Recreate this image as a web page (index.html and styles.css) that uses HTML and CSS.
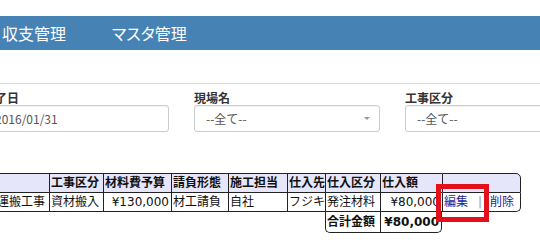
FILE: index.html
```html
<!DOCTYPE html>
<html lang="ja">
<head>
    <meta charset="UTF-8">
    <meta name="viewport" content="width=device-width, initial-scale=1.0">
    <title>仕入一覧</title>
    <link rel="stylesheet" href="styles.css">
</head>
<body>
    <header class="navbar">
        <ul class="nav">
            <li>収支管理</li>
            <li>マスタ管理</li>
        </ul>
    </header>

    <div class="panel">
        <div class="filters">
            <div class="field">
                <label>完了日</label>
                <div class="control">2016/01/31</div>
            </div>
            <div class="field">
                <label>現場名</label>
                <div class="control select">--全て--<span class="caret"></span></div>
            </div>
            <div class="field">
                <label>工事区分</label>
                <div class="control select">--全て--<span class="caret"></span></div>
            </div>
        </div>

        <div class="list">
            <table class="grid">
                <colgroup>
                    <col class="c-name">
                    <col class="c-kind">
                    <col class="c-budget">
                    <col class="c-contract">
                    <col class="c-staff">
                    <col class="c-vendor">
                    <col class="c-type">
                    <col class="c-amount">
                    <col class="c-action">
                </colgroup>
                <thead>
                    <tr>
                        <th>工事名</th>
                        <th>工事区分</th>
                        <th>材料費予算</th>
                        <th>請負形態</th>
                        <th>施工担当</th>
                        <th>仕入先</th>
                        <th>仕入区分</th>
                        <th>仕入額</th>
                        <th class="last"></th>
                    </tr>
                </thead>
                <tbody>
                    <tr>
                        <td class="name">本社倉庫資材運搬工事</td>
                        <td>資材搬入</td>
                        <td class="num">¥130,000</td>
                        <td>材工請負</td>
                        <td>自社</td>
                        <td>フジキ</td>
                        <td>発注材料</td>
                        <td class="num">¥80,000</td>
                        <td class="last actions"><a href="#">編集</a><span class="sep">|</span><a href="#">削除</a></td>
                    </tr>
                </tbody>
                <tfoot>
                    <tr>
                        <td colspan="6" class="blank"></td>
                        <td class="sum first">合計金額</td>
                        <td class="sum num last">¥80,000</td>
                        <td class="blank"></td>
                    </tr>
                </tfoot>
            </table>
            <div class="highlight"></div>
        </div>
    </div>
</body>
</html>
```

FILE: styles.css
```css
body {
    margin: 0;
    font-family: "Noto Sans CJK JP", "Noto Sans", sans-serif;
    color: #333;
    background: #fff;
    overflow: hidden;
}

.navbar {
    margin-top: 16px;
    height: 34px;
    background-color: #4682b4;
}

.nav {
    list-style: none;
    margin: 0 0 0 -21px;
    padding: 0;
    display: flex;
    height: 100%;
}

.nav li {
    padding: 0 23px;
    color: #fff;
    font-size: 16px;
    line-height: 34px;
    font-feature-settings: "palt";
}

.panel {
    margin-top: 33px;
    border-top: 1px solid #dcdcdc;
}

.filters {
    display: flex;
    gap: 25px;
    margin-left: -17px;
    padding-top: 6px;
}

.field {
    width: 186px;
    flex: none;
}

.field label {
    display: block;
    font-size: 12px;
    font-weight: bold;
    line-height: 15px;
    color: #333;
}

.control {
    position: relative;
    box-sizing: border-box;
    height: 27px;
    padding: 0 11px;
    border: 1px solid #ccc;
    border-radius: 3px;
    font-size: 12px;
    line-height: 25px;
    color: #555;
    box-shadow: inset 0 1px 1px rgba(0, 0, 0, 0.05);
}

.caret {
    position: absolute;
    right: 9px;
    top: 11px;
    border-left: 3px solid transparent;
    border-right: 3px solid transparent;
    border-top: 3px solid #999;
}

.list {
    position: relative;
    margin-top: 41px;
}

.grid {
    margin-left: -82px;
    table-layout: fixed;
    width: 603px;
    border-collapse: separate;
    border-spacing: 0;
    font-family: "DejaVu Sans", "Noto Sans CJK JP", sans-serif;
    font-size: 12px;
    color: #111;
}

.c-name { width: 131px; }
.c-kind { width: 54px; }
.c-budget { width: 68px; }
.c-contract { width: 57px; }
.c-staff { width: 59px; }
.c-vendor { width: 38px; }
.c-type { width: 55px; }
.c-amount { width: 62px; }
.c-action { width: 79px; }

.grid th,
.grid td {
    padding: 0 1px;
    line-height: 18px;
    white-space: nowrap;
    overflow: hidden;
    text-align: left;
    border-left: 1px solid #222;
    border-bottom: 1px solid #222;
}

.grid th {
    font-weight: bold;
    background-color: #e6e6fa;
    border-top: 1px solid #222;
}

.grid td.name {
    padding-left: 6px;
}

.grid .last {
    border-right: 1px solid #222;
}

.grid thead .last {
    border-top-right-radius: 5px;
}

.grid tbody .last {
    border-bottom-right-radius: 5px;
}

.grid .num {
    text-align: right;
    padding-right: 2px;
}

.actions {
    padding-left: 4px;
}

.actions a {
    color: #24249a;
    text-decoration: none;
}

.actions .sep {
    color: #999;
    margin: 0 8px 0 10px;
}

.grid tfoot td {
    line-height: 20px;
}

.grid tfoot .blank {
    border: none;
}

.grid tfoot .sum {
    font-weight: bold;
}

.grid tfoot .first {
    border-bottom-left-radius: 5px;
}

.grid tfoot .num.last {
    border-bottom-right-radius: 5px;
}

.highlight {
    position: absolute;
    left: 436px;
    top: 11px;
    width: 53px;
    height: 38px;
    box-sizing: border-box;
    border: 5px solid #e3101b;
}
```
